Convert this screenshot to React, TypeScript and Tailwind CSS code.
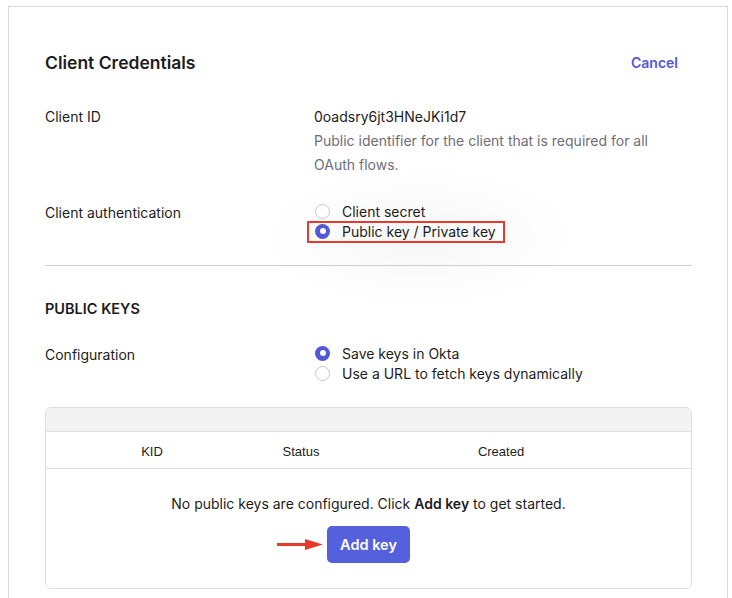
import React from "react";

function Radio({ checked }: { checked: boolean }) {
  return checked ? (
    <span className="flex h-[15px] w-[15px] shrink-0 items-center justify-center rounded-full bg-[#5159d8]">
      <span className="h-[6px] w-[6px] rounded-full bg-white" />
    </span>
  ) : (
    <span className="h-[15px] w-[15px] shrink-0 rounded-full border-[1.5px] border-[#c8c8c8] bg-white" />
  );
}

function RadioRow({ checked, label, boxed }: { checked: boolean; label: string; boxed?: boolean }) {
  return (
    <div className="relative flex h-5 items-center gap-[12px] pl-[1px]">
      <Radio checked={checked} />
      <span className="text-[14px] text-[#1d1d21]">{label}</span>
      {boxed && (
        <span className="pointer-events-none absolute left-[-7px] top-[0px] h-[22px] w-[198px] border-2 border-[#e8392d]" />
      )}
    </div>
  );
}

export default function App() {
  return (
    <div className="min-h-[598px] bg-white pl-[8px] pt-[6px] font-['Inter',sans-serif]" style={{ WebkitFontSmoothing: "antialiased" }}>
      <div className="relative h-[700px] w-[720px] border-x border-t border-[#d9d9d9] pl-[36px] pr-[35px] pt-[44px]">
        <div className="pointer-events-none absolute left-[250px] top-[160px] h-[140px] w-[320px] bg-[radial-gradient(ellipse_at_center,rgba(0,0,0,0.035),transparent_70%)]" />
        <div className="relative">
          <div className="flex h-6 items-center justify-between">
            <h2 className="text-[17.5px] font-semibold text-[#1d1d21]">Client Credentials</h2>
            <button className="mr-[14px] mt-[-2px] text-[14px] font-semibold text-[#5159d8]">Cancel</button>
          </div>

          <div className="mt-[30px] flex">
            <div className="w-[269px] text-[14px] leading-6 text-[#1d1d21]">Client ID</div>
            <div className="text-[14px] leading-6">
              <div className="text-[#1d1d21]">0oadsry6jt3HNeJKi1d7</div>
              <div className="w-[350px] text-[#6e6e78]">Public identifier for the client that is required for all OAuth flows.</div>
            </div>
          </div>

          <div className="mt-[24px] flex">
            <div className="w-[269px] text-[14px] leading-6 text-[#1d1d21]">Client authentication</div>
            <div className="flex flex-col">
              <RadioRow checked={false} label="Client secret" />
              <RadioRow checked label="Public key / Private key" boxed />
            </div>
          </div>

          <div className="mt-[24px] h-px bg-[#cfcfcf]" />

          <div className="mt-[31px] text-[14.5px] font-semibold leading-6 text-[#1d1d21]">PUBLIC KEYS</div>

          <div className="mt-[22px] flex">
            <div className="w-[269px] text-[14px] leading-6 text-[#1d1d21]">Configuration</div>
            <div className="flex flex-col">
              <RadioRow checked label="Save keys in Okta" />
              <RadioRow checked={false} label="Use a URL to fetch keys dynamically" />
            </div>
          </div>

          <div className="mt-[24px] overflow-hidden rounded-[6px] border border-[#e0e0e0]">
            <div className="h-[24px] border-b border-[#e0e0e0] bg-[#f3f3f3]" />
            <div className="grid h-[37px] grid-cols-[212px_86px_314px_1fr] items-center border-b border-[#e0e0e0] pt-[3px] font-['Liberation_Sans',sans-serif] text-[13px] font-medium text-[#1d1d21]">
              <div className="text-center">KID</div>
              <div className="text-center">Status</div>
              <div className="text-center">Created</div>
              <div />
            </div>
            <div className="flex flex-col items-center pb-[25px] pt-[23px]">
              <div className="text-[14px] leading-6 text-[#1d1d21]">
                No public keys are configured. Click <span className="font-semibold">Add key</span> to get started.
              </div>
              <div className="relative mt-[10px]">
                <svg className="absolute left-[-50px] top-[13px]" width="46" height="11" viewBox="0 0 46 11">
                  <rect x="0" y="4" width="32" height="3" fill="#e8392d" />
                  <polygon points="28,0 46,5.5 28,11" fill="#e8392d" />
                </svg>
                <button className="h-[37px] rounded-[5px] bg-[#5560dd] px-[13px] text-[14.5px] font-semibold text-white">Add key</button>
              </div>
            </div>
          </div>
        </div>
      </div>
    </div>
  );
}
